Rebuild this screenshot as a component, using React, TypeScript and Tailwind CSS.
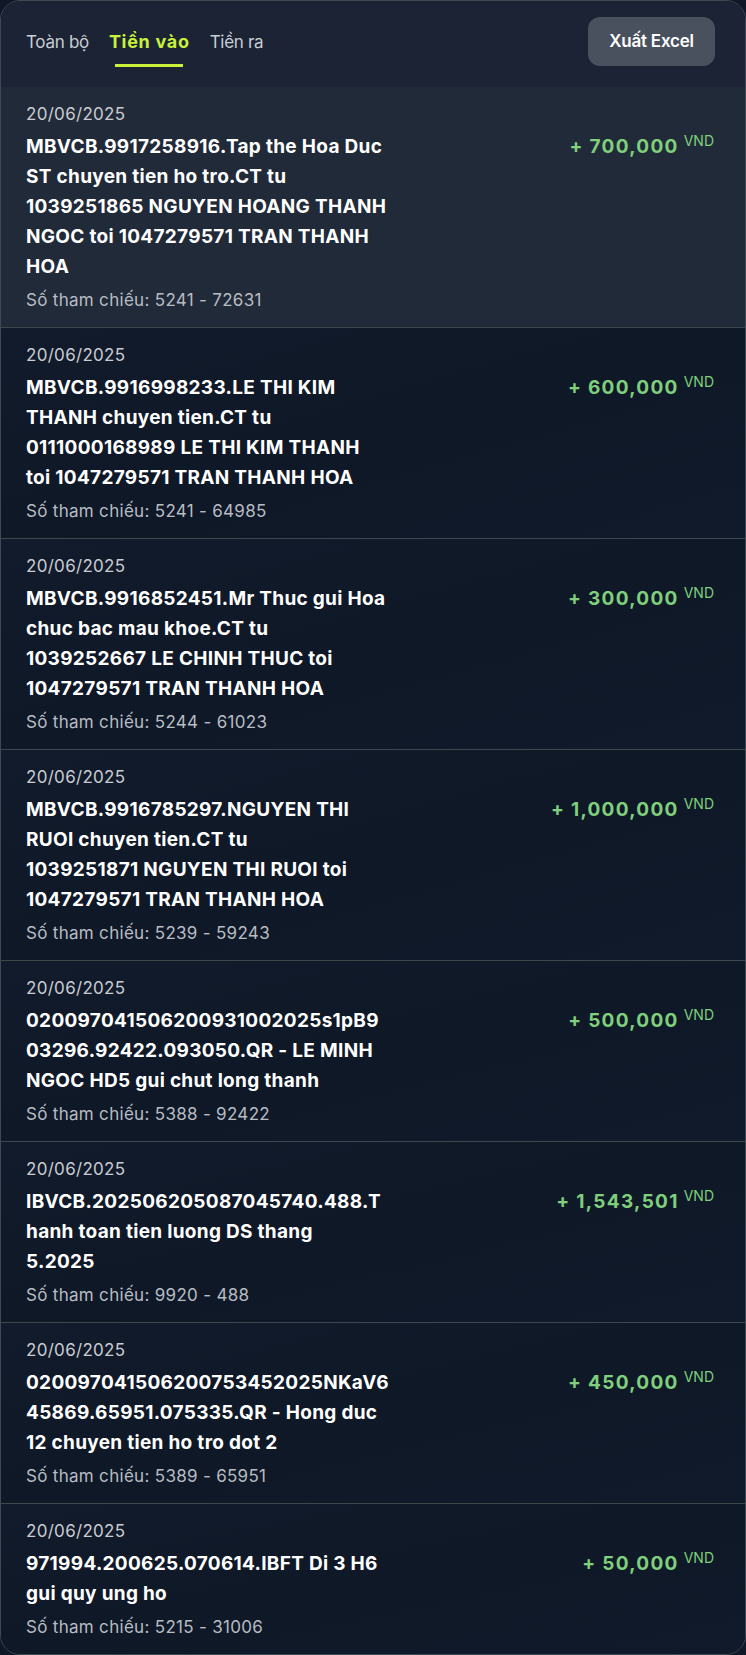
const rows = [
  {
    date: "20/06/2025",
    desc: "MBVCB.9917258916.Tap the Hoa Duc\nST chuyen tien ho tro.CT tu\n1039251865 NGUYEN HOANG THANH\nNGOC toi 1047279571 TRAN THANH\nHOA",
    ref: "5241 - 72631",
    amount: "700,000",
    active: true,
  },
  {
    date: "20/06/2025",
    desc: "MBVCB.9916998233.LE THI KIM\nTHANH chuyen tien.CT tu\n0111000168989 LE THI KIM THANH\ntoi 1047279571 TRAN THANH HOA",
    ref: "5241 - 64985",
    amount: "600,000",
  },
  {
    date: "20/06/2025",
    desc: "MBVCB.9916852451.Mr Thuc gui Hoa\nchuc bac mau khoe.CT tu\n1039252667 LE CHINH THUC toi\n1047279571 TRAN THANH HOA",
    ref: "5244 - 61023",
    amount: "300,000",
  },
  {
    date: "20/06/2025",
    desc: "MBVCB.9916785297.NGUYEN THI\nRUOI chuyen tien.CT tu\n1039251871 NGUYEN THI RUOI toi\n1047279571 TRAN THANH HOA",
    ref: "5239 - 59243",
    amount: "1,000,000",
  },
  {
    date: "20/06/2025",
    desc: "020097041506200931002025s1pB9\n03296.92422.093050.QR - LE MINH\nNGOC HD5 gui chut long thanh",
    ref: "5388 - 92422",
    amount: "500,000",
  },
  {
    date: "20/06/2025",
    desc: "IBVCB.202506205087045740.488.T\nhanh toan tien luong DS thang\n5.2025",
    ref: "9920 - 488",
    amount: "1,543,501",
  },
  {
    date: "20/06/2025",
    desc: "020097041506200753452025NKaV6\n45869.65951.075335.QR - Hong duc\n12 chuyen tien ho tro dot 2",
    ref: "5389 - 65951",
    amount: "450,000",
  },
  {
    date: "20/06/2025",
    desc: "971994.200625.070614.IBFT Di 3 H6\ngui quy ung ho",
    ref: "5215 - 31006",
    amount: "50,000",
  },
];

const tabs = ["Toàn bộ", "Tiền vào", "Tiền ra"];

export default function App() {
  return (
    <div className="min-h-screen bg-[#101827] font-['Inter','Noto_Sans',sans-serif]">
      <div className="w-[746px] h-[1655px] overflow-hidden rounded-[20px] border border-[#3c4a52] bg-[#0e1828]">
        <div className="h-[86px] bg-[#1b2335] flex items-start justify-between pl-[25px] pr-[30px] pt-[16px]">
          <div className="flex gap-[20px] pt-[13px]">
            {tabs.map((t, i) => (
              <div key={t} className="flex flex-col items-center">
                <span
                  className={`leading-[24px] ${
                    i === 1
                      ? "text-[18px] font-bold tracking-[0.7px] text-[#c8f23a]"
                      : "text-[17px] tracking-[-0.3px] text-[#c9cdd4]"
                  }`}
                >
                  {t}
                </span>
                {i === 1 && <div className="mt-[10px] h-[3px] w-[68px] bg-[#c8f23a]" />}
              </div>
            ))}
          </div>
          <button className="h-[49px] w-[127px] rounded-[12px] bg-[#4a515e] text-white text-[17px] font-semibold tracking-[-0.2px]">
            Xuất Excel
          </button>
        </div>

        {rows.map((r, i) => (
          <div
            key={i}
            className={`flex justify-between pl-[25px] pr-[31px] py-[15px] border-b border-[#3a494e] ${
              r.active
                ? "bg-[#212a39]"
                : "bg-gradient-to-br from-[#111b2b] via-[#0e1827] to-[#101a2a]"
            }`}
          >
            <div className="w-[380px]">
              <div className="text-[17px] leading-[24px] tracking-[0.3px] text-[#c9ccd2]">{r.date}</div>
              <div className="mt-[6px] text-[19px] leading-[30px] font-bold text-white whitespace-pre-line tracking-[0.3px]">
                {r.desc}
              </div>
              <div className="mt-[6px] text-[17px] leading-[24px] tracking-[0.3px] text-[#b8bcc3]">
                Số tham chiếu: {r.ref}
              </div>
            </div>
            <div className="pt-[30px] flex items-start">
              <span className="text-[19px] leading-[30px] font-bold text-[#7fcf7c] tracking-[1.3px]">
                + {r.amount}
              </span>
              <span className="ml-[5px] mt-[1px] text-[14px] leading-[16px] text-[#7fcf7c]">VND</span>
            </div>
          </div>
        ))}
      </div>
    </div>
  );
}
